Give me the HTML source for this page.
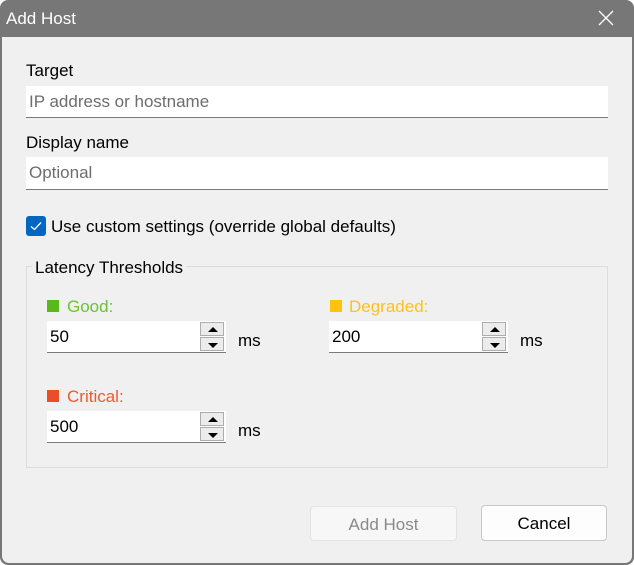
<!DOCTYPE html>
<html><head><meta charset="utf-8"><style>
*{margin:0;padding:0;box-sizing:border-box}
html,body{width:634px;height:565px;overflow:hidden;background:#fff}
body{font-family:"Liberation Sans",sans-serif;font-size:16px;color:#000;position:relative}
.win{position:absolute;left:0;top:0;width:634px;height:565px;background:#777;border-radius:8px;overflow:hidden}
.client{position:absolute;left:2px;top:37px;width:630px;height:526px;background:#f0f0f0;border-radius:0 0 7px 7px}
.title{position:absolute;left:6px;top:9px;color:#fff;font-size:17px}
.a{position:absolute;white-space:nowrap}
.inp{position:absolute;background:#fff;border-bottom:1px solid #7a7a7a;padding-left:3px;line-height:32px;font-size:17px}
.ph{color:#6d6d6d}
.sb{position:absolute;width:24px;height:14px;background:#ececec;border:1px solid #adadad}
.sb svg{position:absolute;left:6px;top:3px}
.sq{position:absolute;width:12px;height:12px}
.btn{position:absolute;border:1px solid #d0d0d0;border-radius:4px;background:#fdfdfd;text-align:center;line-height:35px;font-size:17px}
</style></head><body>
<div class="win">
<div class="title">Add Host</div>
<svg class="a" style="left:598px;top:10px" width="16" height="16"><path d="M1 1L15 15M15 1L1 15" stroke="#fff" stroke-width="1.3"/></svg>
<div class="client"></div>
</div>
<div class="a" style="left:26px;top:61px;font-size:17px">Target</div>
<div class="inp ph" style="left:26px;top:86px;width:582px;height:32px">IP address or hostname</div>
<div class="a" style="left:26px;top:133px;font-size:17px">Display name</div>
<div class="inp ph" style="left:26px;top:157px;width:582px;height:33px">Optional</div>
<div class="a" style="left:26px;top:216px;width:20px;height:20px;background:#0067c0;border-radius:3px"><svg width="20" height="20"><path d="M5 10.5L8.5 13.5L15 6.5" stroke="#fff" stroke-width="1.3" fill="none"/></svg></div>
<div class="a" style="left:51px;top:217px;font-size:17px">Use custom settings (override global defaults)</div>
<div class="a" style="left:26px;top:266px;width:582px;height:202px;border:1px solid #dcdcdc"></div>
<div class="a" style="left:32px;top:258px;padding:0 3px;background:#f0f0f0;font-size:17px">Latency Thresholds</div>

<div class="sq" style="left:47px;top:300px;background:#5bb81b"></div>
<div class="a" style="left:67px;top:297px;font-size:17px;color:#6cc234">Good:</div>
<div class="inp" style="left:47px;top:321px;width:179px;height:32px">50</div>
<div class="sb" style="left:200px;top:322px"><svg width="12" height="8"><path d="M1 6L6 1L11 6Z"/></svg></div>
<div class="sb" style="left:200px;top:337px"><svg width="12" height="8"><path d="M1 2L6 7L11 2Z"/></svg></div>
<div class="a" style="left:238px;top:331px;font-size:17px">ms</div>

<div class="sq" style="left:330px;top:300px;background:#ffc20e"></div>
<div class="a" style="left:349px;top:297px;font-size:17px;color:#ffc21a">Degraded:</div>
<div class="inp" style="left:329px;top:321px;width:179px;height:32px">200</div>
<div class="sb" style="left:482px;top:322px"><svg width="12" height="8"><path d="M1 6L6 1L11 6Z"/></svg></div>
<div class="sb" style="left:482px;top:337px"><svg width="12" height="8"><path d="M1 2L6 7L11 2Z"/></svg></div>
<div class="a" style="left:520px;top:331px;font-size:17px">ms</div>

<div class="sq" style="left:47px;top:390px;background:#ea4e27"></div>
<div class="a" style="left:67px;top:387px;font-size:17px;color:#ee5a2e">Critical:</div>
<div class="inp" style="left:47px;top:411px;width:179px;height:32px">500</div>
<div class="sb" style="left:200px;top:412px"><svg width="12" height="8"><path d="M1 6L6 1L11 6Z"/></svg></div>
<div class="sb" style="left:200px;top:427px"><svg width="12" height="8"><path d="M1 2L6 7L11 2Z"/></svg></div>
<div class="a" style="left:238px;top:421px;font-size:17px">ms</div>

<div class="btn" style="left:310px;top:506px;width:147px;height:35px;background:#f7f7f7;border-color:#e3e3e3;color:#8a8a8a">Add Host</div>
<div class="btn" style="left:481px;top:505px;width:126px;height:36px;border-color:#c8c8c8">Cancel</div>
</body></html>
